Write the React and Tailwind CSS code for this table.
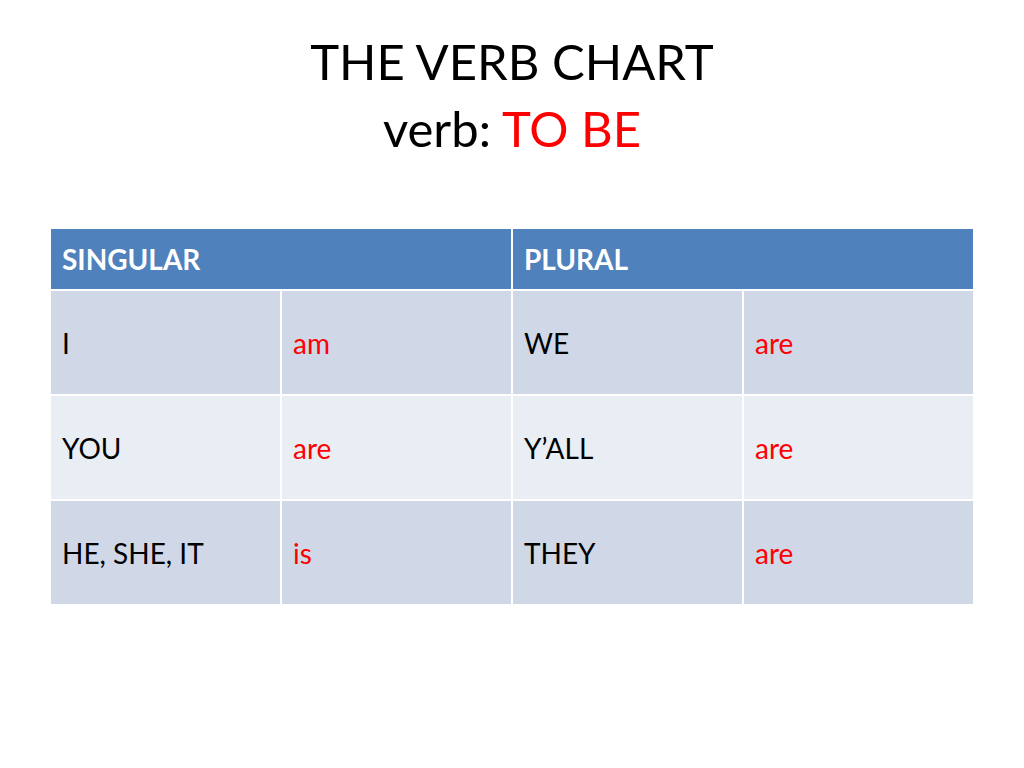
import React from 'react';

const rows = [
  ['I', 'am', 'WE', 'are'],
  ['YOU', 'are', 'Y\u2019ALL', 'are'],
  ['HE, SHE, IT', 'is', 'THEY', 'are'],
];

const App = () => {
  return (
    <div className="w-[1024px] h-[768px] bg-white flex flex-col items-center" style={{ fontFamily: 'Lato, "Open Sans", sans-serif' }}>
      <div className="pt-[28px] text-center text-[49px] leading-[67px] text-black">
        <div>THE VERB CHART</div>
        <div>
          verb: <span className="text-[#ff0000]">TO BE</span>
        </div>
      </div>

      <div className="mt-[67px] w-[922px] bg-white grid grid-cols-4 gap-[2px] text-[28px]">
        <div className="col-span-2 h-[60px] bg-[#4f81bd] text-white font-bold flex items-center pl-[11px]">SINGULAR</div>
        <div className="col-span-2 h-[60px] bg-[#4f81bd] text-white font-bold flex items-center pl-[11px]">PLURAL</div>
        {rows.map((row, i) => (
          <React.Fragment key={i}>
            {row.map((cell, j) => (
              <div
                key={j}
                className={
                  'h-[103px] flex items-center pl-[11px] ' +
                  (i % 2 === 0 ? 'bg-[#d0d8e8] ' : 'bg-[#e9edf4] ') +
                  (j % 2 === 1 ? 'text-[#ff0000]' : 'text-black')
                }
              >
                {cell}
              </div>
            ))}
          </React.Fragment>
        ))}
      </div>
    </div>
  );
};

export default App;
